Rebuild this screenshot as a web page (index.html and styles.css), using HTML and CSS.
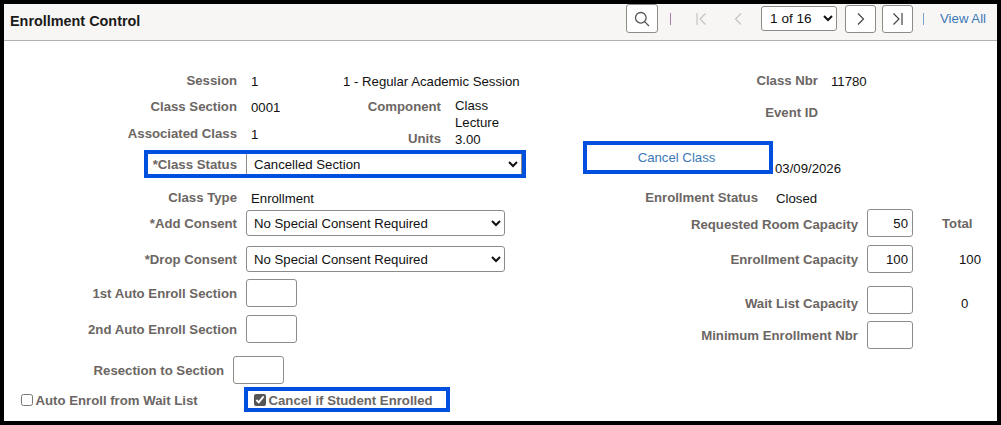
FILE: index.html
```
<!DOCTYPE html>
<html lang="en">
<head>
    <meta charset="UTF-8">
    <meta name="viewport" content="width=device-width, initial-scale=1.0">
    <title>Enrollment Control</title>
    <link rel="stylesheet" href="styles.css">
</head>
<body>
    <div class="frame">
        <div class="header">
            <div class="title">Enrollment Control</div>
            <div class="tools">
                <button class="tool search" aria-label="Search">
                    <svg width="16" height="16" viewBox="0 0 16 16" fill="none" stroke="#555" stroke-width="1.3"><circle cx="6.8" cy="6.8" r="5.3"/><path d="M10.6 10.6 15 15"/></svg>
                </button>
                <span class="sep sep-purple"></span>
                <svg class="nav-first" width="10" height="12" viewBox="0 0 10 12" fill="none" stroke="#c4c4c4" stroke-width="1.2"><path d="M1 0v12M9.5 .5 4 6l5.500 5.500"/></svg>
                <svg class="nav-prev" width="8" height="12" viewBox="0 0 8 12" fill="none" stroke="#c4c4c4" stroke-width="1.2"><path d="M7 .5 1.500 6 7 11.500"/></svg>
                <select class="pager">
                    <option>1 of 16</option>
                </select>
                <button class="tool next" aria-label="Next">
                    <svg width="8" height="12" viewBox="0 0 8 12" fill="none" stroke="#444" stroke-width="1.2"><path d="M1 .5 6.500 6 1 11.500"/></svg>
                </button>
                <button class="tool last" aria-label="Last">
                    <svg width="10" height="12" viewBox="0 0 10 12" fill="none" stroke="#444" stroke-width="1.2"><path d="M.5 .5 6 6l-5.500 5.500M9 0v12"/></svg>
                </button>
                <span class="sep sep-blue"></span>
                <a class="view-all" href="#">View All</a>
            </div>
        </div>

        <div class="form">
            <div class="col-left">
                <div class="row">
                    <span class="lbl">Session</span>
                    <span class="val val-low w-session">1</span>
                    <span class="val-plain val-low">1 - Regular Academic Session</span>
                </div>
                <div class="row row-short">
                    <span class="lbl">Class Section</span>
                    <span class="val val-low w-section">0001</span>
                    <span class="lbl w-component">Component</span>
                    <span class="val val-stack">Class<br>Lecture</span>
                </div>
                <div class="row row-short">
                    <span class="lbl">Associated Class</span>
                    <span class="val val-low w-assoc">1</span>
                    <span class="lbl w-units">Units</span>
                    <span class="val val-units">3.00</span>
                </div>
                <div class="row status-box">
                    <span class="lbl w-status">*Class Status</span>
                    <select class="status-select">
                        <option>Cancelled Section</option>
                    </select>
                </div>
                <div class="row">
                    <span class="lbl">Class Type</span>
                    <span class="val val-low">Enrollment</span>
                </div>
                <div class="row">
                    <span class="lbl">*Add Consent</span>
                    <select class="sel">
                        <option>No Special Consent Required</option>
                    </select>
                </div>
                <div class="row">
                    <span class="lbl">*Drop Consent</span>
                    <select class="sel">
                        <option>No Special Consent Required</option>
                    </select>
                </div>
                <div class="row">
                    <span class="lbl">1st Auto Enroll Section</span>
                    <input class="box" type="text">
                </div>
                <div class="row">
                    <span class="lbl">2nd Auto Enroll Section</span>
                    <input class="box" type="text">
                </div>
                <div class="row">
                    <span class="lbl w-resection">Resection to Section</span>
                    <input class="box" type="text">
                </div>
                <div class="row">
                    <label class="check auto-enroll"><input type="checkbox"><span class="check-text">Auto Enroll from Wait List</span></label>
                    <label class="check cancel-box"><input type="checkbox" checked><span class="check-text">Cancel if Student Enrolled</span></label>
                </div>
            </div>

            <div class="col-right">
                <div class="row">
                    <span class="lbl w-right">Class Nbr</span>
                    <span class="val val-low val-nbr">11780</span>
                </div>
                <div class="row">
                    <span class="lbl w-right">Event ID</span>
                </div>
                <div class="row row-cancel">
                    <a class="cancel-class" href="#">Cancel Class</a>
                    <span class="val-plain date">03/09/2026</span>
                </div>
                <div class="row">
                    <span class="lbl w-enrl-status">Enrollment Status</span>
                    <span class="val-plain val-low closed">Closed</span>
                </div>
                <div class="row">
                    <span class="lbl val-low w-cap">Requested Room Capacity</span>
                    <input class="box box-num" type="text" value="50">
                    <span class="lbl total">Total</span>
                </div>
                <div class="row">
                    <span class="lbl w-cap">Enrollment Capacity</span>
                    <input class="box box-num" type="text" value="100">
                    <span class="val-plain total-num">100</span>
                </div>
                <div class="row">
                    <span class="lbl w-cap wait-low">Wait List Capacity</span>
                    <input class="box box-num" type="text">
                    <span class="val-plain wait-low wait-num">0</span>
                </div>
                <div class="row">
                    <span class="lbl w-cap">Minimum Enrollment Nbr</span>
                    <input class="box box-num" type="text">
                </div>
            </div>
        </div>
    </div>
</body>
</html>
```

FILE: styles.css
```
* {
    box-sizing: border-box;
}
body {
    margin: 0;
    background: black;
    font-family: "Liberation Sans", Arial, sans-serif;
    font-size: 13.2px;
    color: #111;
}
.frame {
    width: 993px;
    height: 417px;
    margin: 4px;
    background: white;
    overflow: hidden;
}

/* header bar */
.header {
    display: flex;
    align-items: center;
    height: 37px;
    padding: 0 11px 0 6px;
    background: #f8f6f4;
    border-bottom: 1px solid #b4b0ac;
}
.title {
    margin-bottom: 2px;
    font-weight: bold;
    font-size: 14.4px;
    color: #1a1a1a;
}
.tools {
    display: flex;
    align-items: center;
    margin-left: auto;
    margin-bottom: 7px;
}
.tool {
    display: flex;
    align-items: center;
    justify-content: center;
    padding: 0;
    background: white;
    border: 1px solid #8f8b87;
    border-radius: 3px;
}
.search {
    width: 32px;
    height: 29px;
}
.next, .last {
    width: 31px;
    height: 28px;
}
.next {
    margin-left: 8px;
}
.last {
    margin-left: 6px;
}
.sep {
    width: 1px;
    height: 12px;
}
.sep-purple {
    margin-left: 12px;
    background: #a57fa8;
}
.sep-blue {
    margin-left: 10px;
    background: #7fa6d0;
}
.nav-first {
    margin-left: 25px;
}
.nav-prev {
    margin-left: 28px;
}
.pager {
    width: 76px;
    height: 25px;
    margin-left: 19px;
    padding-left: 4px;
    background: white;
    border: 1px solid #8f8b87;
    border-radius: 3px;
    font: 13.6px "Liberation Sans", Arial, sans-serif;
    color: #111;
}
.view-all {
    margin-left: 16px;
    color: #3b78b8;
    text-decoration: none;
}

/* form columns */
.form {
    display: flex;
    padding-top: 29px;
}
.col-left, .col-right {
    display: grid;
    align-content: start;
}
.col-left {
    width: 579px;
    flex: none;
    grid-template-rows: 20px 26px 27px 35px 29px 29px 36px 35px 36px 41px 28px;
}
.col-right {
    flex: 1;
    grid-template-rows: 20px 32px 52px 33px 30px 36px 41px 35px;
}
.row {
    display: flex;
    align-items: center;
    align-self: end;
    min-height: 20px;
}
.row-short {
    height: 20px;
}

.lbl {
    flex: none;
    width: 233px;
    text-align: right;
    white-space: nowrap;
    font-weight: bold;
    color: #6b6663;
}
.val {
    margin-left: 14px;
}
.val-plain {
    flex: none;
}
.val-low {
    padding-top: 2px;
}
.w-session {
    width: 92px;
}
.w-section {
    width: 92px;
}
.w-component {
    width: 98px;
}
.val-stack {
    height: 20px;
    line-height: 17px;
    margin-top: 1px;
}
.w-assoc {
    width: 92px;
}
.w-units {
    width: 98px;
    margin-top: 10px;
}
.val-units {
    margin-top: 12px;
}

/* blue highlighted boxes */
.status-box {
    width: 382px;
    height: 28px;
    margin-left: 140px;
    border: 4px solid #0050e0;
}
.w-status {
    width: 89px;
}
.status-select {
    width: 276px;
    height: 20px;
    margin-left: 9px;
    padding: 0 0 0 3px;
    background: white;
    border: 0;
    border-left: 1px solid #8f8b87;
    border-right: 1px solid #8f8b87;
    font: 13.2px "Liberation Sans", Arial, sans-serif;
    color: #111;
}
.row-cancel {
    height: 33px;
}
.cancel-class {
    display: flex;
    flex: none;
    align-items: center;
    justify-content: center;
    width: 190px;
    height: 33px;
    padding-right: 3px;
    border: 4px solid #0050e0;
    color: #3b78b8;
    text-decoration: none;
}
.date {
    margin: 22px 0 0 2px;
}
.cancel-box {
    width: 206px;
    height: 25px;
    padding-left: 6px;
    border: 4px solid #0050e0;
}

/* fields */
.sel {
    width: 259px;
    height: 26px;
    margin-left: 9px;
    padding-left: 3px;
    background: white;
    border: 1px solid #8f8b87;
    border-radius: 3px;
    font: 13.2px "Liberation Sans", Arial, sans-serif;
    color: #111;
}
.box {
    flex: none;
    width: 51px;
    height: 28px;
    margin-left: 9px;
    padding: 0 4px;
    background: white;
    border: 1px solid #8f8b87;
    border-radius: 3px;
    font: 13.2px "Liberation Sans", Arial, sans-serif;
    color: #111;
}
.box-num {
    width: 46px;
    text-align: right;
}
.w-resection {
    width: 220px;
}

.check {
    display: flex;
    align-items: center;
    flex: none;
    font-weight: bold;
    color: #6b6663;
}
.check input {
    width: 12px;
    height: 12px;
    margin: 0 2.5px 0 0;
    accent-color: #555;
}
.check-text {
    padding-top: 2px;
}
.auto-enroll {
    width: 240px;
    padding-left: 17px;
}

/* right column widths */
.w-right {
    width: 235px;
}
.val-nbr {
    margin-left: 13px;
}
.w-enrl-status {
    width: 175px;
}
.closed {
    margin-left: 18px;
}
.w-cap {
    width: 275px;
}
.total {
    width: auto;
    margin-left: 29px;
}
.total-num {
    margin-left: 46px;
}
.wait-low {
    margin-top: 6px;
}
.wait-num {
    margin-left: 48px;
}
```
